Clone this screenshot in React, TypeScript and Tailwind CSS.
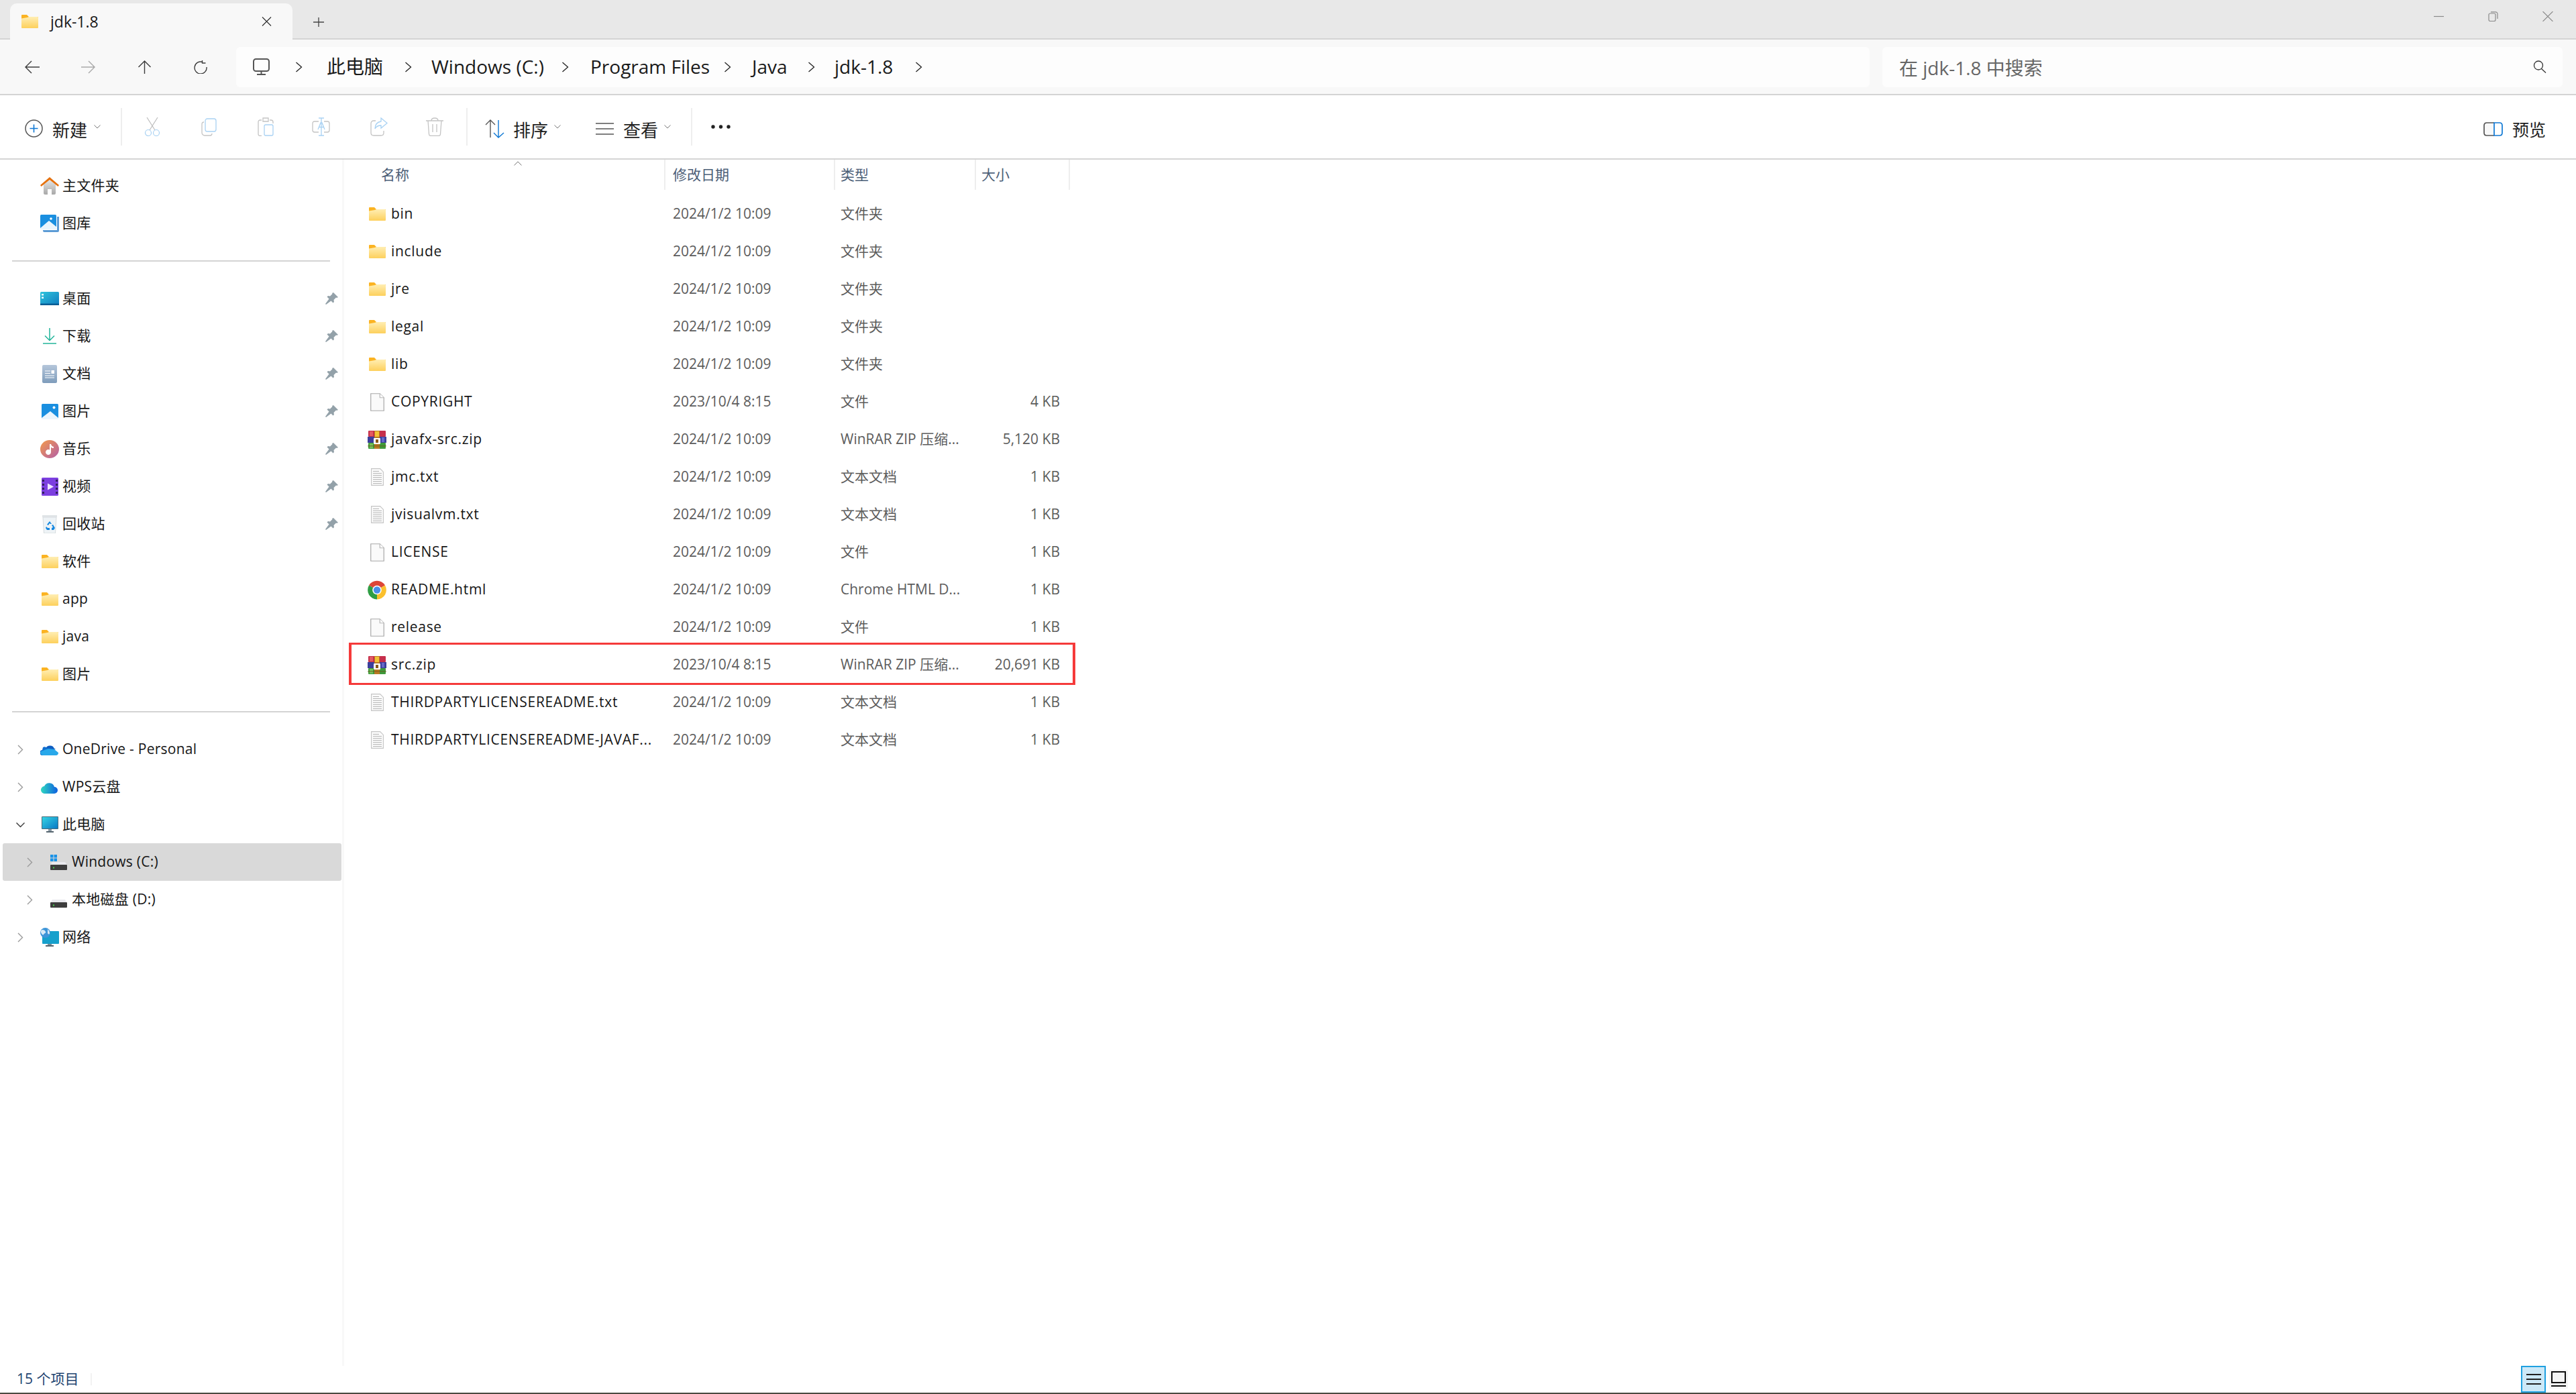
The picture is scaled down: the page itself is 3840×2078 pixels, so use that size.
import type { ReactNode } from "react";

const FolderIcon = () => (
  <svg width="25" height="20" viewBox="0 0 25 20">
    <defs>
      <linearGradient id="folderBody" x1="0" y1="0" x2="0" y2="1">
        <stop offset="0" stopColor="#ffeeb3" />
        <stop offset="1" stopColor="#fdd05c" />
      </linearGradient>
    </defs>
    <path d="M1 0h7l3 3H25v3H0V1a1 1 0 0 1 1-1z" fill="#fbb322" />
    <path d="M0 5.500l9-1.500 2-1h13a1 1 0 0 1 1 1v15a1 1 0 0 1-1 1H1a1 1 0 0 1-1-1z" fill="url(#folderBody)" />
  </svg>
);

const FileIcon = ({ lines }: { lines?: boolean }) =>
  lines ? (
    <svg width="19" height="26" viewBox="0 0 19 26">
      <path d="M.6.600h13l4.800 4.800v20H.6z" fill="#fbfbfb" stroke="#c4c4c4" strokeWidth="1.100" />
      <path
        d="M3 4.500h9M3 7.500h13M3 10.500h13M3 13.500h13M3 16.500h13M3 19.500h13M3 22.500h13"
        stroke="#b4b4b4"
        strokeWidth="1.200"
      />
    </svg>
  ) : (
    <svg width="21" height="27" viewBox="0 0 21 27">
      <path d="M.75.750h13.500l6 6v19.500H.75z" fill="#fafafa" stroke="#a8a8a8" strokeWidth="1.200" />
      <path d="M14.250.750v6h6" fill="#fff" stroke="#b8b8b8" strokeWidth="1.200" />
    </svg>
  );

const RarIcon = () => (
  <svg width="28" height="27" viewBox="0 0 28 27">
    <rect x="1" y="0" width="26" height="9" rx="1" fill="#c62f4b" />
    <rect x="0" y="9" width="28" height="9" fill="#3b3f9c" />
    <rect x="1" y="18" width="26" height="9" rx="1" fill="#3f9a3a" />
    <rect x="3" y="1" width="5" height="7" fill="#e25b62" />
    <rect x="21" y="10" width="4" height="7" fill="#6569c9" />
    <rect x="3" y="19" width="5" height="7" fill="#77c15a" />
    <rect x="10" y="0" width="8" height="27" fill="#b97a24" />
    <rect x="11" y="1" width="6" height="8" fill="#f2c336" />
    <rect x="9" y="11" width="10" height="9" rx="1" fill="#fff" />
    <rect x="12" y="13" width="4" height="5" fill="#8a5a18" />
    <rect x="0" y="22" width="28" height="1.500" fill="#6b4c14" opacity="0.5" />
  </svg>
);

const ChromeIcon = () => (
  <svg width="28" height="29" viewBox="0 0 28 28">
    <path d="M14 14 L2 7 A14 14 0 0 1 26 7 Z" fill="#dd4637" />
    <path d="M14 14 L2 7 A14 14 0 0 0 14 28 Z" fill="#2f9e44" />
    <path d="M14 14 L26 7 A14 14 0 0 1 14 28 Z" fill="#fbc02d" />
    <circle cx="14" cy="14" r="6.800" fill="#fff" />
    <circle cx="14" cy="14" r="5.200" fill="#4a8fe8" />
  </svg>
);

const HomeIcon = () => (
  <svg width="28" height="26" viewBox="0 0 28 26">
    <defs>
      <linearGradient id="homeWall" x1="0" y1="0" x2="0" y2="1">
        <stop offset="0" stopColor="#e6e6e6" />
        <stop offset="1" stopColor="#a8a8a8" />
      </linearGradient>
    </defs>
    <path d="M5 11 14 4l9 7v13a2 2 0 0 1-2 2h-4v-8h-6v8H7a2 2 0 0 1-2-2z" fill="url(#homeWall)" />
    <path d="M0 12 14 0l14 12-1.500 2L14 4 1.500 14z" fill="#e5710e" />
  </svg>
);

const PictureIcon = ({ stacked }: { stacked?: boolean }) =>
  stacked ? (
    <svg width="28" height="26" viewBox="0 0 28 26">
      <path d="M4 23h21V3h3v21a2 2 0 0 1-2 2H6a2 2 0 0 1-2-2z" fill="#5b9bd5" />
      <rect x="0" y="0" width="24" height="22" rx="1.500" fill="#1a8fe0" />
      <path d="M0 20 13 9l11 9v4H0z" fill="#eaf5fd" />
      <circle cx="16" cy="6" r="1.800" fill="#fff" />
    </svg>
  ) : (
    <svg width="25" height="23" viewBox="0 0 25 23">
      <rect width="25" height="23" rx="1.500" fill="#1a8fe0" />
      <path d="M0 21 13 11l12 10v2H0z" fill="#eaf5fd" />
      <circle cx="18.500" cy="5.500" r="2" fill="#fff" />
    </svg>
  );

const DesktopIcon = () => (
  <svg width="28" height="20" viewBox="0 0 28 20">
    <defs>
      <linearGradient id="deskFill" x1="0" y1="0" x2="1" y2="1">
        <stop offset="0" stopColor="#2fc4dc" />
        <stop offset="1" stopColor="#0f7cc0" />
      </linearGradient>
    </defs>
    <rect width="28" height="20" rx="1.500" fill="url(#deskFill)" />
    <rect x="2" y="3" width="3" height="2.500" fill="#e8fbff" />
    <rect x="2" y="7.500" width="3" height="2.500" fill="#e8fbff" />
    <rect y="17.500" width="28" height="2.500" fill="#0b5d94" />
  </svg>
);

const DownloadIcon = () => (
  <svg width="28" height="24" viewBox="0 0 28 24" fill="none" stroke="#22b59a" strokeWidth="1.500">
    <path d="M14 0v18M7 11.500l7 7 7-7" />
    <path d="M4 23h20" />
  </svg>
);

const DocsIcon = () => (
  <svg width="22" height="27" viewBox="0 0 22 27">
    <defs>
      <linearGradient id="docFill" x1="0" y1="0" x2="0" y2="1">
        <stop offset="0" stopColor="#b5c6da" />
        <stop offset="1" stopColor="#7e9cbb" />
      </linearGradient>
    </defs>
    <rect width="22" height="27" rx="2" fill="url(#docFill)" />
    <path d="M4 9h8M4 12.500h8M4 16h14M4 19h14" stroke="#fff" strokeWidth="1.200" />
    <rect x="13.500" y="8" width="4.500" height="5" fill="#fff" />
  </svg>
);

const MusicIcon = () => (
  <svg width="28" height="27" viewBox="0 0 28 27">
    <defs>
      <linearGradient id="musicFill" x1="0" y1="0" x2="1" y2="1">
        <stop offset="0" stopColor="#f39a4a" />
        <stop offset="1" stopColor="#b35fa8" />
      </linearGradient>
    </defs>
    <ellipse cx="14" cy="13.500" rx="14" ry="13.500" fill="url(#musicFill)" />
    <path d="M14 6h2c.5 2.500 2 3.500 4 4v2c-1.500 0-3-.5-4-1.500V18a4 4 0 1 1-2-3.400z" fill="#fff" />
  </svg>
);

const VideoIcon = () => (
  <svg width="25" height="27" viewBox="0 0 25 27">
    <rect width="25" height="27" rx="1.500" fill="#7c3fe0" />
    <path d="M1 3h3v3H1zM1 9h3v3H1zM1 15h3v3H1zM1 21h3v3H1zM21 3h3v3h-3zM21 9h3v3h-3zM21 15h3v3h-3zM21 21h3v3h-3z" fill="#33205e" />
    <path d="M9 8.500 18 13.500 9 18.500z" fill="#efe7ff" />
  </svg>
);

const RecycleIcon = () => (
  <svg width="22" height="27" viewBox="0 0 22 27">
    <path d="M1 3h20l-1.500 24h-17z" fill="#eef3f6" stroke="#d5dadd" />
    <rect x="0" y="0" width="22" height="3" fill="#dfe3e6" />
    <path d="M11 9l3 4h-2l-1-1-2 3-2-1zM6 17l-1 2 2 3h4v-3H8zM16 14l-2 1 2 3-2 1v3h3l2-3z" fill="#1587e0" />
  </svg>
);

const OneDriveIcon = () => (
  <svg width="28" height="18" viewBox="0 0 28 18">
    <path d="M8 8a7 7 0 0 1 13 0c1 0 2 .5 2 .5L12 13z" fill="#0f5ec2" />
    <path d="M4 6a5 5 0 0 1 6 1l4 3-9 8H4a4 4 0 0 1-1-8z" fill="#0f6fd0" />
    <path d="M4 18a4 4 0 0 1-3-6l11-4 9 1 6 5a4 4 0 0 1-3 4z" fill="#28a8ea" />
  </svg>
);

const WpsIcon = () => (
  <svg width="26" height="19" viewBox="0 0 26 19">
    <defs>
      <linearGradient id="wpsFill" x1="0" y1="0" x2="1" y2="0">
        <stop offset="0" stopColor="#2fd8c0" />
        <stop offset="1" stopColor="#0e5fe0" />
      </linearGradient>
    </defs>
    <path d="M6 19a5.500 5.500 0 0 1-1-11 8 8 0 0 1 15 1 5 5 0 0 1 0 10z" fill="url(#wpsFill)" />
  </svg>
);

const PcIcon = () => (
  <svg width="25" height="25" viewBox="0 0 25 25">
    <defs>
      <linearGradient id="pcFill" x1="0" y1="0" x2="1" y2="1">
        <stop offset="0" stopColor="#35d4e4" />
        <stop offset="1" stopColor="#0a78c4" />
      </linearGradient>
    </defs>
    <rect width="25" height="19" rx="1" fill="#4a6b7a" />
    <rect x="1" y="1" width="23" height="17" fill="url(#pcFill)" />
    <rect x="10" y="19" width="5" height="3" fill="#8a9aa4" />
    <rect x="7" y="22" width="11" height="2" fill="#55656f" />
  </svg>
);

const DiskIcon = ({ win }: { win?: boolean }) => (
  <svg width="25" height="24" viewBox="0 0 25 24">
    <path d="M3 12h19l3 5v2H0v-2z" fill="#e9e9ee" />
    <rect y="16" width="25" height="8" rx="1" fill="#3d3d3d" />
    <rect x="4" y="19.500" width="2" height="2" fill="#44d04a" />
    {win && (
      <path d="M0 1h4.500v4.500H0zM5.500 1H10v4.500H5.500zM0 6.500h4.500V11H0zM5.500 6.500H10V11H5.500z" fill="#1a92e6" />
    )}
  </svg>
);

const NetworkIcon = () => (
  <svg width="28" height="28" viewBox="0 0 28 28">
    <rect x="3" y="5" width="25" height="19" rx="1" fill="#16a0cc" />
    <rect x="11" y="24" width="6" height="2" fill="#7c8c96" />
    <rect x="8" y="26" width="12" height="2" fill="#55656f" />
    <circle cx="7.500" cy="7.500" r="7.500" fill="#3d95d8" />
    <path d="M3 3c3 0 4 1 5 3s-2 2-3 4-3-1-4-3 0-3 2-4zM11 2c2 2 3 4 3 6s-2 2-3 0z" fill="#d8eaf6" />
  </svg>
);

const PinIcon = () => (
  <svg width="19" height="19" viewBox="0 0 19 19" fill="#93a1a9">
    <path d="M12 0l7 7-2 1-1-.5-3.500 3.500.5 3-1.500 1.500-3-3L1 18l-1-1 5.500-7.500-3-3L4 5l3 .5L10.500 2 10 1z" />
  </svg>
);

const Chevron = ({ down }: { down?: boolean }) => (
  <svg width="13" height="15" viewBox="0 0 13 15" fill="none" stroke={down ? "#3a3a3a" : "#9a9a9a"} strokeWidth="1.400">
    <path d={down ? "M.5 4.500l6 6 6-6" : "M3 1l6.500 6.500L3 14"} />
  </svg>
);

const Caret = () => (
  <svg width="10" height="6" viewBox="0 0 10 6" fill="none" stroke="#777" strokeWidth="1">
    <path d="M.5.500 5 5 9.500.5" />
  </svg>
);

const CrumbChevron = () => (
  <svg width="11" height="16" viewBox="0 0 11 16" fill="none" stroke="#222" strokeWidth="1.300">
    <path d="M1.500 1l8 7-8 7" />
  </svg>
);

const ToolDivider = ({ className }: { className: string }) => (
  <div className={`h-[56px] w-[2px] bg-[#eeeeee] ${className}`} />
);

type TreeRow = {
  label: string;
  icon: ReactNode;
  pinned?: boolean;
  chevron?: "right" | "down";
  indent?: boolean;
  selected?: boolean;
};

const quickTop: TreeRow[] = [
  { label: "主文件夹", icon: <HomeIcon /> },
  { label: "图库", icon: <PictureIcon stacked /> },
];

const quickPinned: TreeRow[] = [
  { label: "桌面", icon: <DesktopIcon />, pinned: true },
  { label: "下载", icon: <DownloadIcon />, pinned: true },
  { label: "文档", icon: <DocsIcon />, pinned: true },
  { label: "图片", icon: <PictureIcon />, pinned: true },
  { label: "音乐", icon: <MusicIcon />, pinned: true },
  { label: "视频", icon: <VideoIcon />, pinned: true },
  { label: "回收站", icon: <RecycleIcon />, pinned: true },
  { label: "软件", icon: <FolderIcon /> },
  { label: "app", icon: <FolderIcon /> },
  { label: "java", icon: <FolderIcon /> },
  { label: "图片", icon: <FolderIcon /> },
];

const drives: TreeRow[] = [
  { label: "OneDrive - Personal", icon: <OneDriveIcon />, chevron: "right" },
  { label: "WPS云盘", icon: <WpsIcon />, chevron: "right" },
  { label: "此电脑", icon: <PcIcon />, chevron: "down" },
  { label: "Windows (C:)", icon: <DiskIcon win />, chevron: "right", indent: true, selected: true },
  { label: "本地磁盘 (D:)", icon: <DiskIcon />, chevron: "right", indent: true },
  { label: "网络", icon: <NetworkIcon />, chevron: "right" },
];

const SideRow = ({ row }: { row: TreeRow }) => (
  <div
    className={`flex h-[56px] items-center rounded-[3px] ${row.selected ? "ml-[4px] w-[505px] bg-[#d9d9d9]" : "ml-[4px] w-[505px]"}`}
  >
    <div className={`flex w-[56px] shrink-0 items-center ${row.indent ? "pl-[34px]" : "pl-[20px]"}`}>
      {row.chevron && <Chevron down={row.chevron === "down"} />}
    </div>
    <div className={`flex h-[28px] w-[28px] shrink-0 items-center justify-center ${row.indent ? "ml-[13px]" : ""}`}>
      {row.icon}
    </div>
    <span className={`whitespace-nowrap text-[21px] tracking-[0.25px] text-[#161616] ${row.indent ? "ml-[6px]" : "ml-[5px]"}`}>
      {row.label}
    </span>
    {row.pinned && (
      <div className="ml-auto mr-[5px] flex">
        <PinIcon />
      </div>
    )}
  </div>
);

const Sidebar = () => (
  <aside className="w-[513px] shrink-0 border-r-[3px] border-[#f8f8f8] pt-[11px]">
    {quickTop.map((row) => (
      <SideRow key={row.label} row={row} />
    ))}
    <div className="mx-[18px] my-[27px] h-[2px] bg-[#d4d4d4]" />
    {quickPinned.map((row, i) => (
      <SideRow key={i} row={row} />
    ))}
    <div className="mx-[18px] my-[27px] h-[2px] bg-[#d4d4d4]" />
    {drives.map((row) => (
      <SideRow key={row.label} row={row} />
    ))}
  </aside>
);

type FileRow = {
  name: string;
  date: string;
  type: string;
  size?: string;
  icon: ReactNode;
  marked?: boolean;
};

const jan = "2024/1/2 10:09";
const oct = "2023/10/4 8:15";

const files: FileRow[] = [
  { name: "bin", date: jan, type: "文件夹", icon: <FolderIcon /> },
  { name: "include", date: jan, type: "文件夹", icon: <FolderIcon /> },
  { name: "jre", date: jan, type: "文件夹", icon: <FolderIcon /> },
  { name: "legal", date: jan, type: "文件夹", icon: <FolderIcon /> },
  { name: "lib", date: jan, type: "文件夹", icon: <FolderIcon /> },
  { name: "COPYRIGHT", date: oct, type: "文件", size: "4 KB", icon: <FileIcon /> },
  { name: "javafx-src.zip", date: jan, type: "WinRAR ZIP 压缩...", size: "5,120 KB", icon: <RarIcon /> },
  { name: "jmc.txt", date: jan, type: "文本文档", size: "1 KB", icon: <FileIcon lines /> },
  { name: "jvisualvm.txt", date: jan, type: "文本文档", size: "1 KB", icon: <FileIcon lines /> },
  { name: "LICENSE", date: jan, type: "文件", size: "1 KB", icon: <FileIcon /> },
  { name: "README.html", date: jan, type: "Chrome HTML D...", size: "1 KB", icon: <ChromeIcon /> },
  { name: "release", date: jan, type: "文件", size: "1 KB", icon: <FileIcon /> },
  { name: "src.zip", date: oct, type: "WinRAR ZIP 压缩...", size: "20,691 KB", icon: <RarIcon />, marked: true },
  { name: "THIRDPARTYLICENSEREADME.txt", date: jan, type: "文本文档", size: "1 KB", icon: <FileIcon lines /> },
  { name: "THIRDPARTYLICENSEREADME-JAVAF...", date: jan, type: "文本文档", size: "1 KB", icon: <FileIcon lines /> },
];

const FileList = () => (
  <section className="min-w-0 flex-1">
    <div className="relative flex h-[53px] w-[1082px] items-start text-[21px] text-[#4d6078]">
      <div className="relative flex h-[45px] w-[479px] items-center border-r-[2px] border-[#eeeeee] pl-[55px]">
        名称
        <svg className="absolute right-[212px] top-[2px]" width="12" height="7" viewBox="0 0 12 7" fill="none" stroke="#777" strokeWidth="1">
          <path d="M.5 6.500 6 1l5.500 5.500" />
        </svg>
      </div>
      <div className="flex h-[45px] w-[253px] items-center border-r-[2px] border-[#eeeeee] pl-[11px]">修改日期</div>
      <div className="flex h-[45px] w-[210px] items-center border-r-[2px] border-[#eeeeee] pl-[8px]">类型</div>
      <div className="flex h-[45px] w-[140px] items-center border-r-[2px] border-[#eeeeee] pl-[8px]">大小</div>
    </div>
    {files.map((file) => (
      <div key={file.name} className="relative flex h-[56px] w-[1082px] items-center text-[21px]">
        <div className="ml-[35px] flex h-[28px] w-[28px] shrink-0 items-center justify-center">{file.icon}</div>
        <span className="ml-[7px] w-[420px] shrink-0 whitespace-nowrap tracking-[0.7px] text-[#161616]">{file.name}</span>
        <span className="w-[250px] shrink-0 whitespace-nowrap text-[#5c5c5c]">{file.date}</span>
        <span className="w-[175px] shrink-0 whitespace-nowrap text-[#5c5c5c]">{file.type}</span>
        <span className="w-[152px] shrink-0 whitespace-nowrap text-right text-[#5c5c5c]">{file.size}</span>
        {file.marked && (
          <div className="pointer-events-none absolute -bottom-[2px] -top-[5px] left-[7px] w-[1083px] border-x-[4px] border-y-[3px] border-[#f53a3a]" />
        )}
      </div>
    ))}
  </section>
);

const crumbs = [
  { label: "此电脑", slot: "w-[47px]", text: "w-[116px]" },
  { label: "Windows (C:)", slot: "w-[40px]", text: "w-[194px]" },
  { label: "Program Files", slot: "w-[43px]", text: "w-[199px]" },
  { label: "Java", slot: "w-[42px]", text: "w-[83px]" },
  { label: "jdk-1.8", slot: "w-[40px]", text: "w-[120px]" },
];

const TitleBar = () => (
  <div className="flex h-[59px] items-end border-b-[2px] border-[#d4d4d4] bg-[#e8e8e8] pl-[15px]">
    <div className="-mb-[2px] flex h-[54px] w-[421px] items-center rounded-t-[10px] bg-[#f8f8f8] pl-[17px]">
      <FolderIcon />
      <span className="ml-[18px] text-[23px] text-[#1a1a1a]">jdk-1.8</span>
      <svg className="ml-auto mr-[31px]" width="15" height="14" viewBox="0 0 15 14" fill="none" stroke="#333" strokeWidth="1.200">
        <path d="M1 .5l13 13M14 .5l-13 13" />
      </svg>
    </div>
    <svg className="ml-[31px] mb-[17px]" width="16" height="14" viewBox="0 0 16 14" fill="none" stroke="#444" strokeWidth="1.300">
      <path d="M8 0v14M0 7h16" />
    </svg>
    <div className="ml-auto mr-[34px] flex gap-[65px] self-start pt-[17px]">
      <svg width="16" height="15" viewBox="0 0 16 15" fill="none" stroke="#8a8a8a" strokeWidth="1.200">
        <path d="M0 7.500h15" />
      </svg>
      <svg width="16" height="15" viewBox="0 0 16 15" fill="none" stroke="#8a8a8a" strokeWidth="1.200">
        <rect x="1" y="3" width="10" height="11.500" rx="2" />
        <path d="M4 .8h7a3 3 0 0 1 3 3V11" />
      </svg>
      <svg width="16" height="15" viewBox="0 0 16 15" fill="none" stroke="#8a8a8a" strokeWidth="1.100">
        <path d="M.5 0l15 15M15.500 0l-15 15" />
      </svg>
    </div>
  </div>
);

const AddressRow = () => (
  <div className="flex h-[83px] items-center border-b-[2px] border-[#d4d4d4] bg-[#f8f8f8] pl-[37px]">
    <svg width="22" height="20" viewBox="0 0 22 20" fill="none" stroke="#3c3c3c" strokeWidth="1.400">
      <path d="M22 10H1M10 1l-9 9 9 9" />
    </svg>
    <svg className="ml-[62px]" width="21" height="20" viewBox="0 0 21 20" fill="none" stroke="#a8a8a8" strokeWidth="1.400">
      <path d="M0 10h20M11 1l9 9-9 9" />
    </svg>
    <svg className="ml-[63px]" width="21" height="20" viewBox="0 0 21 20" fill="none" stroke="#3c3c3c" strokeWidth="1.400">
      <path d="M10.500 20V1M1.500 10l9-9 9 9" />
    </svg>
    <svg className="ml-[61px]" width="22" height="20" viewBox="0 0 22 20" fill="none" stroke="#3c3c3c" strokeWidth="1.400">
      <path d="M15 2.500a9 9 0 1 0 6 7.500M14.500 0v4h5" />
    </svg>
    <div className="ml-[43px] flex h-[60px] w-[2435px] items-center rounded-[6px] bg-[#fdfdfd] pl-[24px] text-[28px] text-[#1a1a1a]">
      <svg className="mr-[37px]" width="27" height="26" viewBox="0 0 27 26" fill="none" stroke="#555" strokeWidth="2">
        <rect x="2" y="1" width="23" height="18" rx="3.500" />
        <path d="M13.500 19v4M7 24h13" />
      </svg>
      {crumbs.map((crumb) => (
        <div key={crumb.label} className="flex items-center">
          <div className={`flex ${crumb.slot}`}>
            <CrumbChevron />
          </div>
          <span className={`-mt-[2px] whitespace-nowrap ${crumb.text}`}>{crumb.label}</span>
        </div>
      ))}
      <CrumbChevron />
    </div>
    <div className="ml-[19px] flex h-[60px] w-[1014px] items-center rounded-[6px] bg-[#fdfdfd] pl-[25px] pr-[24px] text-[28px] text-[#666666]">
      <span className="pt-[2px]">在 jdk-1.8 中搜索</span>
      <svg className="ml-auto" width="20" height="19" viewBox="0 0 20 19" fill="none" stroke="#333" strokeWidth="1.300">
        <circle cx="8" cy="7.500" r="6.500" />
        <path d="M12.500 12.500 19 18.500" />
      </svg>
    </div>
  </div>
);

const Toolbar = () => (
  <div className="flex h-[96px] items-center border-b-[2px] border-[#d4d4d4] bg-white pl-[37px] text-[26px] text-[#1f1f1f]">
    <svg className="mt-[4px]" width="27" height="27" viewBox="0 0 27 27" fill="none">
      <circle cx="13.500" cy="13.500" r="12.500" stroke="#555" strokeWidth="1.500" />
      <path d="M13.500 7.500v12M7.500 13.500h12" stroke="#0f78d4" strokeWidth="1.600" />
    </svg>
    <span className="ml-[14px] mt-[10px] w-[62px]">新建</span>
    <Caret />
    <ToolDivider className="ml-[30px]" />
    <svg className="ml-[33px]" width="24" height="28" viewBox="0 0 24 28" fill="none" strokeWidth="1.200">
      <path d="M4 0l12 19M20 0 8 19" stroke="#bdbdbd" />
      <circle cx="6" cy="23" r="4.500" stroke="#a9d2f3" />
      <circle cx="18" cy="23" r="4.500" stroke="#a9d2f3" />
    </svg>
    <svg className="ml-[61px]" width="23" height="27" viewBox="0 0 23 27" fill="none" strokeWidth="1.300">
      <rect x="6" y="1" width="16" height="19" rx="3" stroke="#a9d2f3" />
      <path d="M4 6c-2 0-3 1-3 3v13c0 2 2 4 4 4h8c2 0 3-1 3-3" stroke="#c4c4c4" />
    </svg>
    <svg className="ml-[61px]" width="24" height="28" viewBox="0 0 24 28" fill="none" strokeWidth="1.300">
      <path d="M6 4H4C2 4 1 5 1 7v18c0 1.500 1 2.500 3 2.500h2M18 4h2c2 0 3 1 3 3v2M8 1h8v5H8z" stroke="#c4c4c4" />
      <rect x="10" y="11" width="13" height="16" rx="2" stroke="#a9d2f3" />
    </svg>
    <svg className="ml-[57px]" width="27" height="28" viewBox="0 0 27 28" fill="none" strokeWidth="1.300">
      <path d="M10 6H4C2 6 1 7 1 9v10c0 2 1 3 3 3h6M18 6h5c2 0 3 1 3 3v10c0 2-1 3-3 3h-5" stroke="#c4c4c4" />
      <path d="M14 1v26M10 1h8M10 27h8M9 18l4-10h2l4 10M10.500 14.500h7" stroke="#a9d2f3" />
    </svg>
    <svg className="ml-[60px]" width="26" height="28" viewBox="0 0 26 28" fill="none" strokeWidth="1.300">
      <path d="M8 5H5C3 5 1 6 1 9v14c0 3 2 4 4 4h11c3 0 4-2 4-4v-3" stroke="#c4c4c4" />
      <path d="M16 1l9 7.500-9 7.500v-4c-4 0-7 1-9 5 0-6 3-10 9-11z" stroke="#a9d2f3" />
    </svg>
    <svg className="ml-[57px]" width="26" height="28" viewBox="0 0 26 28" fill="none" stroke="#c4c4c4" strokeWidth="1.300">
      <path d="M0 5h26M8 5c0-3 2-4 5-4s5 1 5 4M3 5l1.500 20c0 1.500 1 2.500 3 2.500h11c2 0 3-1 3-2.500L23 5M10 10v12M16 10v12" />
    </svg>
    <ToolDivider className="ml-[34px]" />
    <svg className="ml-[26px] mt-[6px]" width="29" height="28" viewBox="0 0 29 28" fill="none" strokeWidth="1.400">
      <path d="M8 27V1M1 8l7-7 7 7" stroke="#555" />
      <path d="M20 1v26M13 20l7 7 8-7" stroke="#0f78d4" />
    </svg>
    <span className="ml-[13px] mt-[10px] w-[61px]">排序</span>
    <Caret />
    <svg className="ml-[52px] mt-[6px]" width="27" height="20" viewBox="0 0 27 20" fill="none" stroke="#555" strokeWidth="1.600">
      <path d="M0 2h27M0 10h27M0 18h27" />
    </svg>
    <span className="ml-[14px] mt-[10px] w-[61px]">查看</span>
    <Caret />
    <ToolDivider className="ml-[30px]" />
    <svg className="ml-[28px]" width="29" height="6" viewBox="0 0 29 6" fill="#222">
      <circle cx="3" cy="3" r="2.700" />
      <circle cx="14.500" cy="3" r="2.700" />
      <circle cx="26" cy="3" r="2.700" />
    </svg>
    <div className="ml-auto mr-[45px] flex items-center">
      <svg className="mt-[6px]" width="29" height="21" viewBox="0 0 29 21" fill="none" strokeWidth="1.700">
        <path d="M16 1H5C3 1 1 2 1 5v11c0 3 2 4 4 4h11" stroke="#555" fill="#f8f8f8" />
        <path d="M16 1h8c2 0 4 1 4 4v11c0 3-2 4-4 4h-8z" stroke="#0f78d4" />
      </svg>
      <span className="ml-[14px] mt-[10px] text-[25px]">预览</span>
    </div>
  </div>
);

const StatusBar = () => (
  <div className="flex h-[42px] shrink-0 items-center border-b-[2px] border-[#4a4a40] bg-white pl-[25px] text-[21px] text-[#1e4470]">
    <span className="w-[110px]">15 个项目</span>
    <div className="h-[18px] w-[2px] bg-[#f2f2f2]" />
    <div className="ml-auto mr-[12px] flex items-center gap-[5px]">
      <div className="flex h-[40px] w-[37px] items-center justify-center border-[2px] border-[#1ea0e0] bg-[#cce8f7]">
        <svg width="22" height="18" viewBox="0 0 22 18" fill="none" stroke="#222" strokeWidth="2">
          <path d="M0 2h22M0 9h22M0 16h22" />
        </svg>
      </div>
      <div className="flex h-[28px] w-[28px] items-center justify-center bg-[#f5f5f5]">
        <svg width="22" height="24" viewBox="0 0 22 24" fill="none" stroke="#111" strokeWidth="2">
          <rect x="1" y="1" width="20" height="16" />
          <path d="M0 22h22" />
        </svg>
      </div>
    </div>
  </div>
);

const App = () => {
  return (
    <div className="flex h-screen w-full flex-col overflow-hidden bg-white font-['Open_Sans','Noto_Sans_CJK_SC',sans-serif]">
      <TitleBar />
      <AddressRow />
      <Toolbar />
      <main className="flex min-h-0 flex-1">
        <Sidebar />
        <FileList />
      </main>
      <StatusBar />
    </div>
  );
};

export default App;
